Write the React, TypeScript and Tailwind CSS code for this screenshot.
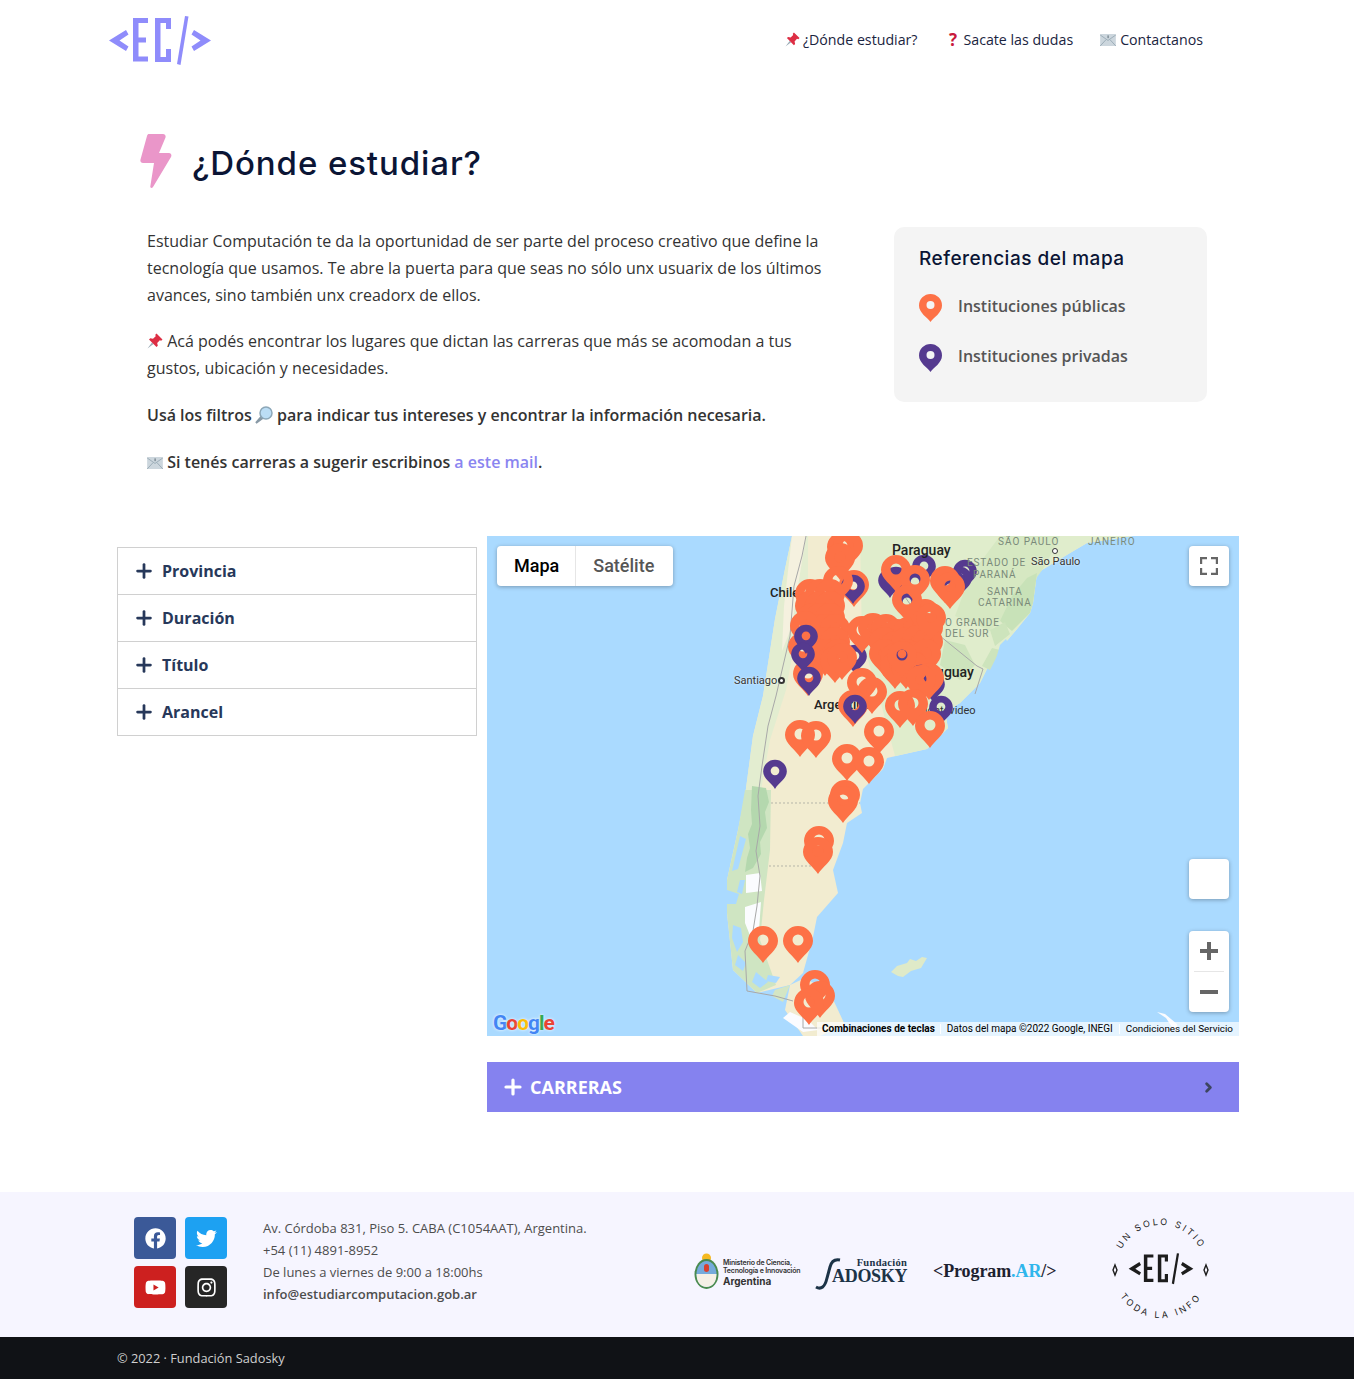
import { Plus, ChevronRight } from 'lucide-react';
import { FaFacebook, FaTwitter, FaYoutube, FaInstagram } from 'react-icons/fa';

const ORANGE = '#fd7146';
const PURPLE = '#553a8f';

type Marker = [number, number, 'o' | 'p'];

const fila = (y: number, xs: number[]): Marker[] => xs.map((x) => [x, y, 'o'] as Marker);

// marcadores del mapa en coordenadas de página (x, y de la punta), de abajo hacia arriba
const marcadores: Marker[] = [
  [890, 598, 'p'], [896, 596, 'p'], [965, 589, 'p'], [924, 584, 'p'], [960, 596, 'p'], [915, 600, 'p'], [907, 620, 'p'], [950, 606, 'p'],
  [933, 702, 'p'], [941, 725, 'p'],
  [854, 607, 'o'], [853, 604, 'p'], [855, 674, 'p'],
  [842, 569, 'o'], [848, 568, 'o'], [840, 580, 'o'], [838, 603, 'o'],
  ...fila(616, [810, 820, 830]),
  ...fila(628, [810, 820, 830]),
  ...fila(640, [812, 820, 830]),
  ...fila(651, [815, 825, 835]),
  ...fila(664, [825, 835]),
  ...fila(676, [825, 838]),
  [862, 653, 'o'], [873, 650, 'o'], [886, 651, 'o'], [897, 656, 'o'], [908, 654, 'o'], [918, 648, 'o'], [928, 650, 'o'],
  [884, 664, 'o'], [895, 668, 'o'], [906, 664, 'o'], [917, 662, 'o'], [928, 664, 'o'],
  [884, 676, 'o'], [895, 680, 'o'], [906, 676, 'o'], [917, 678, 'o'], [926, 676, 'o'],
  ...fila(689, [895, 906, 914]),
  [925, 636, 'o'], [931, 640, 'o'],
  [902, 672, 'p'], [902, 678, 'o'], [835, 683, 'o'], [842, 680, 'o'], [805, 648, 'o'], [803, 669, 'o'], [808, 696, 'o'],
  [896, 592, 'o'], [915, 602, 'o'], [907, 622, 'o'], [945, 603, 'o'], [950, 609, 'o'],
  [921, 694, 'p'], [929, 700, 'o'], [921, 702, 'o'], [862, 705, 'o'], [872, 714, 'o'], [853, 727, 'o'], [900, 728, 'o'], [913, 726, 'o'], [930, 748, 'o'],
  [879, 754, 'o'], [800, 757, 'o'], [816, 758, 'o'], [847, 781, 'o'], [869, 784, 'o'],
  [845, 817, 'o'], [843, 823, 'o'], [819, 863, 'o'], [818, 874, 'o'],
  [763, 963, 'o'], [798, 963, 'o'], [815, 1007, 'o'], [820, 1018, 'o'], [809, 1025, 'o'],
  [806, 654, 'p'], [803, 672, 'p'], [809, 696, 'p'], [855, 724, 'p'], [775, 789, 'p'],
];

function Pin({ x, y, kind }: { x: number; y: number; kind: 'o' | 'p' }) {
  const s = kind === 'p' ? 0.79 : 1;
  return (
    <path
      transform={`translate(${x - 15 * s} ${y - 37 * s}) scale(${s})`}
      fillRule="evenodd"
      fill={kind === 'p' ? PURPLE : ORANGE}
      d="M15 37C11 30 0 24 0 15a15 15 0 0 1 30 0c0 9-11 15-15 22zM15 8.500a5.500 5.500 0 1 0 0 11 5.500 5.500 0 0 0 0-11z"
    />
  );
}

function LegendPin({ color }: { color: string }) {
  return (
    <svg width="23" height="28" viewBox="0 0 23 28" className="shrink-0">
      <path d="M11.5 28C8.5 23.5 0 19 0 11.5a11.5 11.5 0 0 1 23 0C23 19 14.5 23.5 11.5 28z" fill={color} />
      <circle cx="11.5" cy="11" r="4" fill="#f4f4f4" />
    </svg>
  );
}

function PinEmoji({ size = 16 }: { size?: number }) {
  return (
    <svg width={size} height={size} viewBox="0 0 16 16" className="inline-block align-[-2px]">
      <path d="M.5 15.500L5 9.500 6.500 11z" fill="#99aab5" />
      <path d="M9.500 .5L15.500 6.500 14.200 7.700 12.800 7.300 10.200 10 10.800 12.800 9.500 14 2 6.500 3.300 5.300 6 5.800 8.700 3.300 8.300 1.800z" fill="#dd2e44" />
    </svg>
  );
}

function MailEmoji() {
  return (
    <svg width="16" height="12" viewBox="0 0 17 13" className="inline-block align-[-1px]">
      <rect x="0" y="0" width="17" height="13" rx="1" fill="#ccd6dd" />
      <path d="M0 1l8.500 6L17 1M0 13l6.500-7M17 13l-6.500-7" fill="none" stroke="#99aab5" strokeWidth="1" />
      <rect x="8" y="1.500" width="1.200" height="3" fill="#66757f" />
    </svg>
  );
}

function LensEmoji() {
  return (
    <svg width="18" height="18" viewBox="0 0 18 18" className="-ml-px inline-block align-[-3px]">
      <path d="M1 17l6-7 1.500 1.500z" fill="#8899a6" strokeWidth="2" stroke="#8899a6" />
      <circle cx="11" cy="7" r="6" fill="#bbddf5" stroke="#8ca7b8" strokeWidth="1.500" />
    </svg>
  );
}

function Logo({ color, className = '' }: { color: string; className?: string }) {
  return (
    <svg viewBox="0 0 104 50" className={className} fill={color}>
      <path d="M18 14L1 24.500 18 35l2.500-4.500-9-6 9-6z" />
      <path d="M25 2h15v5h-9.500v14.500H38v5h-7.500v14H40v5H25z" />
      <path d="M47 2h16v11h-5V7h-5.500v34H58v-8h5v13H47z" />
      <path d="M69 48L77 0l3.500.5L72.500 49z" />
      <path d="M86 14l17 10.500L86 35l-2.500-4.500 9-6-9-6z" />
    </svg>
  );
}

function MapPanel() {
  return (
    <div className="relative h-[500px] w-[752px] shrink-0 overflow-hidden bg-[#aadaff] font-['Roboto',sans-serif]">
      <svg viewBox="487 536 752 500" className="absolute inset-0 h-full w-full">
        {/* continente y Patagonia */}
        <path
          d="M792 536L785 569 775 619 763 696 753 736 745 796 738 830 727 880 727 913 733 970 757 993 790 985 803 973 813 937 817 917 838 893 833 870 843 843 847 823 862 813 860 803 863 789 883 769 887 758 927 749 948 728 945 712 960 703 980 683 987 669 1000 649 1017 629 1030 613 1033 603 1037 573 1070 553 1087 543 1133 536z"
          fill="#f2ecd0"
        />
        <path d="M790 985L805 978 830 993 845 1025 820 1036 803 1036 785 1010z" fill="#f2ecd0" />
        {/* verdes del norte */}
        <path d="M860 536L1133 536 1087 543 1070 553 1037 573 1033 603 1030 613 1017 629 1000 649 987 669 980 683 960 703 945 712 948 728 927 749 895 756 880 700 862 640z" fill="#e0edcc" />
        <path d="M1000 536h60l-15 30-25 35-30 30-35-15 15-40z" fill="#d6e8c2" />
        <path d="M1037 573l-4 30-3 10-18 18-12-10 12-25 15-18z" fill="#c8e2b8" />
        <path d="M945 640l20 5 10 20-15 15-20-15zM990 630l15-8 5 12-15 12zM1000 650l-10 20-8-4 10-18z" fill="#cde4bc" />
        {/* cordillera: pálida al norte, más verde al sur */}
        <path d="M785 569L775 619 763 696 753 736 745 796 760 796 770 740 786 690 795 640 808 590 808 536 792 536z" fill="#e3edd0" />
        <path d="M792 536h14l-8 50-6 40-10 25 2-45z" fill="#f5f1df" />
        <path d="M745 790L771 790 770 850 764 900 760 940 776 985 757 993 733 970 727 913 727 880 738 830z" fill="#cfe5c2" />
        <path d="M752 786l14 2 3 14-4 10 2 16-7 14 1 12-8 14-8 4 2-14 3-10-2-14 4-10-1-14z" fill="#b4d8ae" />
        {/* canales, islas y hielos del sur */}
        <path d="M727 890l12 4-3 10-9 0zM733 925l8 3 2 14-6 10-5-14zM740 836l6 3-8 30-6 2zM738 955l8 8-3 8-8-6zM756 972l12 10-8 6-8-6zM745 880l-3 14-5-2 3-12zM768 975l12 2-4 6-10-2z" fill="#aadaff" />
        <path d="M746 875l14-2 2 18-16 2zM745 907l16-5-2 28-8 8-6-15z" fill="#fbfcff" />
        <path d="M790 1012l18 8 10 10-15 2-20-14z" fill="#fbfcff" />
        <path d="M790 985L783 1002 772 996 775 990z" fill="#d4e6c4" />
        {/* Malvinas y hielo al pie */}
        <path d="M891 972l6-6 10-3 3-4 6 2 6-4 5 1-6 10-10 3-8 6-5-1z" fill="#dfeac8" />
        <path d="M1157 1012l8 2 12 10 1 7-4-1-8-12z" fill="#fbfcff" />
        <path d="M1000 645l6-6 2 4-8 12-4 4z" fill="#aadaff" />
        {/* límites */}
        <path d="M806 536l-4 20-8 30-4 50-14 60-8 30-6 40-4 30 2 30-4 25 4 25-3 30-4 25-8 20 2 40 28 5 18 5" fill="none" stroke="#a8a8a8" strokeWidth="1" />
        <path d="M900 590l25 35 15 11 37 30 6 3M983 669l-8 25" fill="none" stroke="#a8a8a8" strokeWidth="1" />
        <path d="M771 803h89M769 866h50" fill="none" stroke="#b5b5a8" strokeWidth="1" strokeDasharray="2 2" />
        <path d="M803 1008v20h20" fill="none" stroke="#a8a8a8" strokeWidth="1" />

        {/* etiquetas por debajo de los marcadores */}
        <text x="770" y="597" fontSize="13" fontWeight="500" fill="#222">Chile</text>
        <text x="814" y="709" fontSize="13" fontWeight="500" fill="#222">Argentina</text>
        <text x="922" y="677" fontSize="14" fontWeight="500" fill="#222">Uruguay</text>
        <text x="918" y="714" fontSize="11" fill="#333">Montevideo</text>

        {marcadores.map(([x, y, k], i) => (
          <Pin key={i} x={x} y={y} kind={k} />
        ))}
      </svg>

      {/* etiquetas */}
      <span className="absolute left-[405px] top-[4px] text-sm font-medium text-[#222]">Paraguay</span>
      <span className="absolute left-[247px] top-[137px] text-[11px] text-[#333] [text-shadow:0_0_2px_#fff]">Santiago</span>
      <span className="absolute left-[291px] top-[141px] size-[7px] rounded-full border-2 border-[#333] bg-white" />
      <span className="absolute left-[511px] -top-[2px] text-[10px] tracking-[1px] text-[#7a8a7a]">SÃO PAULO</span>
      <span className="absolute left-[601px] -top-[2px] text-[10px] tracking-[1px] text-[#7a8a7a]">JANEIRO</span>
      <span className="absolute left-[544px] top-[18px] text-[11px] text-[#333] [text-shadow:0_0_2px_#fff]">São Paulo</span>
      <span className="absolute left-[565px] top-[12px] size-[6px] rounded-full border border-[#333] bg-white" />
      <span className="absolute left-[480px] top-[21px] text-[10px] leading-[12px] tracking-[0.8px] text-[#7a8a7a]">ESTADO DE<br /><span className="pl-[6px]">PARANÁ</span></span>
      <span className="absolute left-[491px] top-[50px] text-center text-[10px] leading-[11px] tracking-[0.8px] text-[#7a8a7a]">SANTA<br />CATARINA</span>
      <span className="absolute left-[458px] top-[81px] text-[10px] leading-[11px] tracking-[0.8px] text-[#7a8a7a]">O GRANDE<br />DEL SUR</span>

      {/* controles */}
      <div className="absolute left-[10px] top-[10px] flex h-10 rounded-sm bg-white text-lg font-medium shadow-[0_1px_4px_rgba(0,0,0,0.3)]">
        <div className="flex items-center border-r border-[#e6e6e6] pl-[17px] pr-[16px] text-black">Mapa</div>
        <div className="flex items-center pl-[17px] pr-[19px] text-[#565656]">Satélite</div>
      </div>
      <div className="absolute right-[10px] top-[10px] flex size-10 items-center justify-center rounded-sm bg-white shadow-[0_1px_4px_rgba(0,0,0,0.3)]">
        <svg width="18" height="18" viewBox="0 0 18 18" fill="none" stroke="#666" strokeWidth="2.4">
          <path d="M1 7V1h6M11 1h6v6M17 11v6h-6M7 17H1v-6" />
        </svg>
      </div>
      <div className="absolute right-[10px] top-[323px] size-10 rounded-sm bg-white shadow-[0_1px_4px_rgba(0,0,0,0.3)]" />
      <div className="absolute right-[10px] top-[395px] flex h-[81px] w-10 flex-col items-center rounded-sm bg-white shadow-[0_1px_4px_rgba(0,0,0,0.3)]">
        <div className="flex h-10 items-center justify-center">
          <svg width="18" height="18" viewBox="0 0 18 18" fill="#666"><path d="M7 0h4v7h7v4h-7v7H7v-7H0V7h7z" /></svg>
        </div>
        <div className="h-px w-[30px] bg-[#e6e6e6]" />
        <div className="flex h-10 items-center justify-center">
          <svg width="18" height="4" viewBox="0 0 18 4" fill="#666"><rect width="18" height="4" /></svg>
        </div>
      </div>

      {/* logo de Google y pie */}
      <span className="absolute bottom-[2px] left-[6px] text-[21px] font-bold leading-none tracking-[-1px] [text-shadow:0_0_3px_#fff]">
        <span className="text-[#4285f4]">G</span>
        <span className="text-[#ea4335]">o</span>
        <span className="text-[#fbbc05]">o</span>
        <span className="text-[#4285f4]">g</span>
        <span className="text-[#34a853]">l</span>
        <span className="text-[#ea4335]">e</span>
      </span>
      <div className="absolute bottom-0 right-0 flex h-[14px] items-center bg-[#ffffffb0] pr-[6px] text-[9.85px] leading-none text-black">
        <span className="px-[5px] text-[10px] font-bold">Combinaciones de teclas</span>
        <span className="border-l border-[#fff] px-[6px] text-[10px]">Datos del mapa ©2022 Google, INEGI</span>
        <span className="border-l border-[#fff] pl-[6px]">Condiciones del Servicio</span>
      </div>
    </div>
  );
}

const filtros = ['Provincia', 'Duración', 'Título', 'Arancel'];

export default function App() {
  return (
    <div className="bg-white font-['Open_Sans',sans-serif] text-[#333]">
      {/* Header */}
      <header className="flex h-20 items-center justify-between pl-[108px] pr-[151px]">
        <Logo color="#8f8cfb" className="mt-[1px] h-[50px] w-[104px]" />
        <nav className="flex items-center text-[14.2px] text-[#1a2440]">
          <a className="mr-[30px] flex items-center gap-[3px]"><PinEmoji size={15} />¿Dónde estudiar?</a>
          <a className="mr-[27px] flex items-center gap-[5px]"><span className="w-[11px] text-center text-[17px] font-bold leading-none text-[#c8193c]">?</span>Sacate las dudas</a>
          <a className="flex items-center gap-[4px]"><MailEmoji />Contactanos</a>
        </nav>
      </header>

      {/* Titulo */}
      <div className="flex h-[148px] items-start pl-[140px] pt-[54px]">
        <svg width="32" height="54" viewBox="0 0 32 54" className="shrink-0">
          <path d="M9 0h14c2 0 3 1.500 2.500 3.500L19 19h10c2 0 3 2 2 4L13 53c-1 1.500-3 1-2.700-.5L14 29H3c-2 0-3-1.500-2.500-3.500L7 2C7.500.5 8 0 9 0z" fill="#ea96c9" />
        </svg>
        <h1 className="ml-5 mt-[5px] font-['Inter',sans-serif] text-[33px] font-medium leading-[48px] tracking-[0.9px] text-[#0b1535]">¿Dónde estudiar?</h1>
      </div>

      {/* Intro */}
      <section className="flex justify-between pl-[147px] pr-[147px]">
        <div className="w-[690px] text-base leading-[27px]">
          <p>Estudiar Computación te da la oportunidad de ser parte del proceso creativo que define la tecnología que usamos. Te abre la puerta para que seas no sólo unx usuarix de los últimos avances, sino también unx creadorx de ellos.</p>
          <p className="mt-[19px]"><PinEmoji /> Acá podés encontrar los lugares que dictan las carreras que más se acomodan a tus gustos, ubicación y necesidades.</p>
          <p className="mt-5 font-semibold">Usá los filtros <LensEmoji /> para indicar tus intereses y encontrar la información necesaria.</p>
          <p className="mt-5 font-semibold"><MailEmoji /> Si tenés carreras a sugerir escribinos <a className="text-[#8a85f0]">a este mail</a>.</p>
        </div>
        <aside className="-mt-px h-[175px] w-[313px] rounded-[10px] bg-[#f4f4f4] pl-[25px] pt-[18px]">
          <h3 className="font-['Inter',sans-serif] text-[19px] font-medium leading-[28px] tracking-[0.5px] text-[#0b1535]">Referencias del mapa</h3>
          <div className="mt-[21px] flex items-start gap-[16px] font-semibold text-[#555]"><LegendPin color={ORANGE} />Instituciones públicas</div>
          <div className="mt-[22px] flex items-start gap-[16px] font-semibold text-[#555]"><LegendPin color={PURPLE} />Instituciones privadas</div>
        </aside>
      </section>

      {/* Filtros y mapa */}
      <section className="mt-[60px] flex gap-[10px] pl-[117px]">
        <div className="w-[360px] pt-[11px]">
          <div className="border border-[#d0d0d0]">
            {filtros.map((f, i) => (
              <div key={f} className={`flex items-center gap-[7px] pl-[15px] font-bold text-[#27385a] ${i > 0 ? 'h-[47px] border-t border-[#d0d0d0]' : 'h-[46px]'}`}>
                <Plus size={22} strokeWidth={3} />
                {f}
              </div>
            ))}
          </div>
        </div>
        <div className="w-[752px]">
          <MapPanel />
          <div className="mt-[26px] flex h-[50px] items-center justify-between bg-[#8582ef] pl-[14px] pr-[23px] text-lg font-bold text-white">
            <span className="flex items-center gap-[5px]"><Plus size={24} strokeWidth={3.2} />CARRERAS</span>
            <ChevronRight size={15} strokeWidth={4.5} className="text-[#3d4560]" />
          </div>
        </div>
      </section>

      {/* Footer */}
      <footer className="mt-20 flex h-[145px] items-start bg-[#f6f5ff] pl-[134px] pt-[25px]">
        <div className="grid grid-cols-[42px_42px] grid-rows-[42px_42px] gap-x-[9px] gap-y-[7px] text-white">
          <a className="flex items-center justify-center rounded bg-[#3b5998]"><FaFacebook size={21} /></a>
          <a className="flex items-center justify-center rounded bg-[#1da1f2]"><FaTwitter size={21} /></a>
          <a className="flex items-center justify-center rounded bg-[#cd201f]"><FaYoutube size={21} /></a>
          <a className="flex items-center justify-center rounded bg-[#262626]"><FaInstagram size={21} /></a>
        </div>
        <div className="ml-9 w-[324px] whitespace-nowrap text-[13px] leading-[22px] text-[#4d4d4d]">
          <p>Av. Córdoba 831, Piso 5. CABA (C1054AAT), Argentina.</p>
          <p>+54 (11) 4891-8952</p>
          <p>De lunes a viernes de 9:00 a 18:00hs</p>
          <p className="font-semibold">info@estudiarcomputacion.gob.ar</p>
        </div>

        {/* logos */}
        <div className="ml-[107px] mt-[28px] flex h-[52px] items-center">
          <svg width="25" height="37" viewBox="0 0 25 37" className="shrink-0">
            <circle cx="12.5" cy="5" r="4.5" fill="#f5b921" />
            <ellipse cx="12.5" cy="21" rx="12" ry="15" fill="#4a8b4f" />
            <ellipse cx="12.5" cy="21" rx="10" ry="13" fill="#75aadb" />
            <path d="M2.500 21h20c0 8-4 13-10 13S2.500 29 2.500 21z" fill="#f5f0e6" />
            <rect x="10" y="11" width="5" height="8" rx="2.5" fill="#d8402f" />
          </svg>
          <div className="ml-[4px] mt-[4px] w-[80px] font-['Inter',sans-serif] text-[#333]">
            <p className="text-[7px] font-semibold leading-[8px] tracking-[-0.2px]">Ministerio de Ciencia, Tecnología e Innovación</p>
            <p className="text-[10px] font-bold leading-[12px]">Argentina</p>
          </div>
          <div className="ml-[12px] flex w-[92px] shrink-0 items-center font-['Liberation_Serif',serif] font-bold text-[#1c3347]">
            <svg width="26" height="32" viewBox="0 0 26 32" fill="none" stroke="#1c3347" strokeWidth="3" className="mt-[6px] shrink-0">
              <path d="M1 29c5 3 9 0 11-9l3-11c1.500-6 5-8 10-7" />
            </svg>
            <div className="-ml-[9px] flex-1 text-right leading-none">
              <p className="text-[10.5px] leading-[11px] tracking-[0.3px]">Fundación</p>
              <p className="text-[18px] leading-[17px] tracking-[-0.3px]">ADOSKY</p>
            </div>
          </div>
          <div className="ml-[26px] w-[123px] shrink-0 whitespace-nowrap font-['Liberation_Serif',serif] text-[18px] font-bold tracking-[-0.1px] text-[#1d2230]">
            &lt;Program<span className="text-[#2fb6ec]">.AR</span>/&gt;
          </div>
        </div>
        <div className="relative ml-[53px] size-[104px] shrink-0">
          <svg viewBox="0 0 104 104" className="absolute inset-0 h-full w-full">
            <defs>
              <path id="arcoTop" d="M8 52a44 44 0 0 1 88 0" />
              <path id="arcoBot" d="M3 52a49 49 0 0 0 98 0" />
            </defs>
            <text fontFamily="Inter, sans-serif" fontSize="9" letterSpacing="2.4" fill="#1d1d1d">
              <textPath href="#arcoTop" startOffset="50%" textAnchor="middle">UN SOLO SITIO</textPath>
            </text>
            <text fontFamily="Inter, sans-serif" fontSize="9" letterSpacing="2.8" fill="#1d1d1d">
              <textPath href="#arcoBot" startOffset="50%" textAnchor="middle">TODA LA INFO</textPath>
            </text>
            <path d="M6 48l2 5-2 5-2-5zM97 48l2 5-2 5-2-5z" fill="none" stroke="#1d1d1d" strokeWidth="1.4" />
          </svg>
          <Logo color="#1d1d1d" className="absolute left-[19px] top-[36px] h-[32px] w-[66px]" />
        </div>
      </footer>
      <div className="flex h-[42px] items-center bg-[#101216] pl-[117px] pt-[2px] text-[12.8px] text-[#cfcfcf]">© 2022 · Fundación Sadosky</div>
    </div>
  );
}
